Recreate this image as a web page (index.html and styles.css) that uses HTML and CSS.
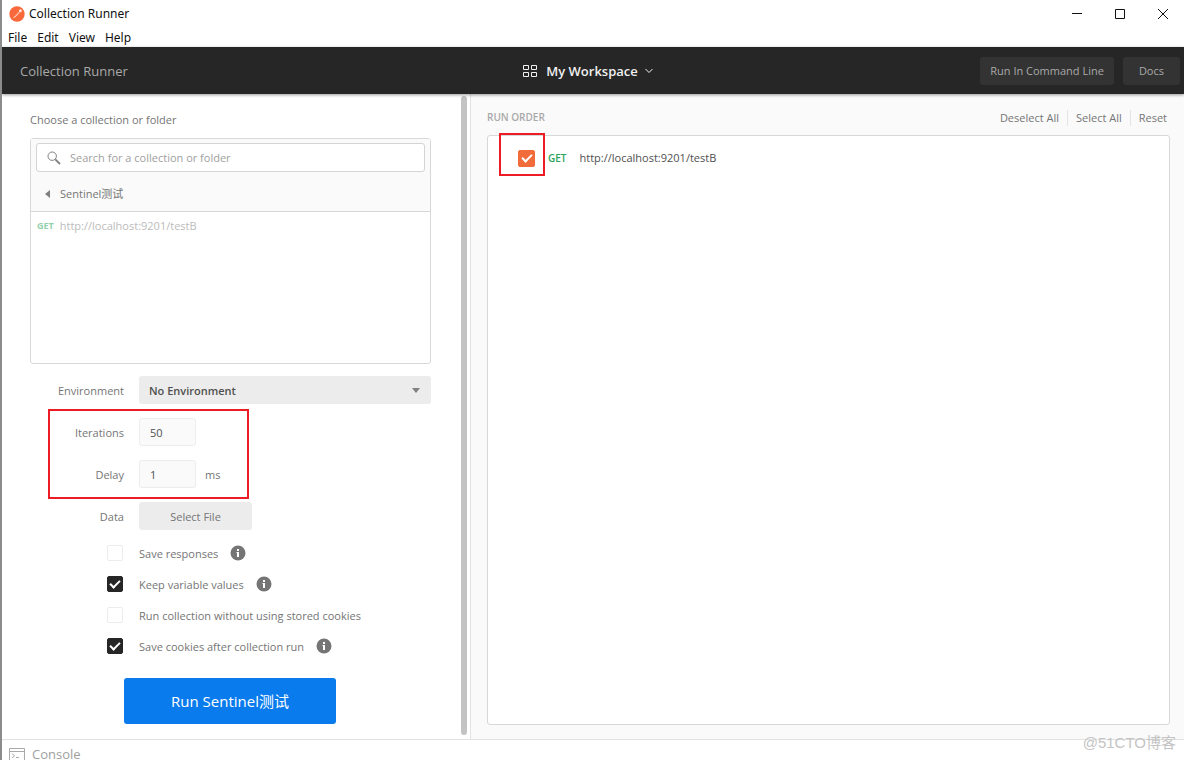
FILE: index.html
```html
<!DOCTYPE html>
<html lang="en">
<head>
<meta charset="utf-8">
<title>Collection Runner</title>
<link rel="stylesheet" href="styles.css">
</head>
<body>
<div class="window">
  <div class="titlebar">
    <svg class="logo" viewBox="0 0 16 16" aria-hidden="true"><circle cx="8" cy="8" r="7.7" fill="#f9683a"/><path d="M4 12.300 5 10.400 9.700 5.700 10.800 6.800 6.200 11.300Z" fill="#ffd9c9"/><circle cx="11.400" cy="4.700" r="1.500" fill="#ffe6da"/><path d="m5.300 10.700 4.800-4.600" stroke="#f9683a" stroke-width=".5"/></svg>
    <span class="title">Collection Runner</span>
    <div class="controls">
      <button type="button" aria-label="Minimize"><svg viewBox="0 0 12 12"><path d="M1 5.500h10"/></svg></button>
      <button type="button" aria-label="Maximize"><svg viewBox="0 0 12 12"><path d="M1.500 1.500h9v9h-9z"/></svg></button>
      <button type="button" aria-label="Close"><svg viewBox="0 0 12 12"><path d="m1 1 10 10M11 1 1 11"/></svg></button>
    </div>
  </div>
  <nav class="menubar">
    <button type="button">File</button><button type="button">Edit</button><button type="button">View</button><button type="button">Help</button>
  </nav>
  <header class="header">
    <h1>Collection Runner</h1>
    <button type="button" class="workspace">
      <svg class="grid-icon" viewBox="0 0 14 14"><path d="M.5 1.500h5v4h-5zM8.500 1.500h5v4h-5zM.5 8.500h5v4h-5zM8.500 8.500h5v4h-5z"/></svg>
      <span>My Workspace</span>
      <svg class="chevron" viewBox="0 0 8 8"><path d="m.5 2 3.500 3.500L7.500 2"/></svg>
    </button>
    <div class="header-actions">
      <button type="button">Run In Command Line</button>
      <button type="button" class="docs">Docs</button>
    </div>
  </header>
  <main class="main">
    <section class="sidebar">
      <h2 class="choose">Choose a collection or folder</h2>
      <div class="picker">
        <div class="picker-head">
          <label class="search">
            <svg viewBox="0 0 14 14" aria-hidden="true"><circle cx="5.200" cy="5.200" r="4.200"/><path d="m8.300 8.300 4.700 4.700" stroke-width="1.800"/></svg>
            <input type="text" placeholder="Search for a collection or folder" aria-label="Search for a collection or folder">
          </label>
          <button type="button" class="crumb"><svg viewBox="0 0 5 8" aria-hidden="true"><path d="M5 0v8L0 4z"/></svg>Sentinel测试</button>
        </div>
        <div class="picker-item"><span class="method">GET</span><span>http://localhost:9201/testB</span></div>
      </div>
      <form class="form">
        <div class="row">
          <label for="env">Environment</label>
          <div class="select"><select id="env"><option>No Environment</option></select><svg viewBox="0 0 8 5" aria-hidden="true"><path d="M0 0h8L4 5z"/></svg></div>
        </div>
        <div class="marked">
          <div class="row"><label for="iter">Iterations</label><input class="num" id="iter" type="text" value="50"></div>
          <div class="row"><label for="delay">Delay</label><input class="num" id="delay" type="text" value="1"><span class="unit">ms</span></div>
        </div>
        <div class="row"><label for="file">Data</label><button type="button" id="file" class="file">Select File</button></div>
        <div class="checks">
          <div class="check"><input type="checkbox" id="c1"><label for="c1">Save responses</label><svg class="info" viewBox="0 0 16 16"><circle cx="8" cy="8" r="7.500"/><path d="M7 4h2v2H7zM6.500 7H9v5H7V8h-.5z"/></svg></div>
          <div class="check"><input type="checkbox" id="c2" checked><label for="c2">Keep variable values</label><svg class="info" viewBox="0 0 16 16"><circle cx="8" cy="8" r="7.500"/><path d="M7 4h2v2H7zM6.500 7H9v5H7V8h-.5z"/></svg></div>
          <div class="check"><input type="checkbox" id="c3"><label for="c3">Run collection without using stored cookies</label></div>
          <div class="check"><input type="checkbox" id="c4" checked><label for="c4">Save cookies after collection run</label><svg class="info" viewBox="0 0 16 16"><circle cx="8" cy="8" r="7.500"/><path d="M7 4h2v2H7zM6.500 7H9v5H7V8h-.5z"/></svg></div>
        </div>
        <button type="button" class="run">Run Sentinel测试</button>
      </form>
      <div class="scrollbar"></div>
    </section>
    <section class="order">
      <div class="order-head">
        <h2>RUN ORDER</h2>
        <div class="links"><button type="button">Deselect All</button><button type="button">Select All</button><button type="button">Reset</button></div>
      </div>
      <div class="order-list">
        <div class="request">
          <span class="tick"><input type="checkbox" id="r1" checked></span>
          <span class="method">GET</span>
          <label for="r1">http://localhost:9201/testB</label>
        </div>
      </div>
    </section>
  </main>
  <footer class="footer">
    <button type="button"><svg viewBox="0 0 16 16" aria-hidden="true"><path d="M.5 2.500h15v12H.5zM.5 5.500h15M3 7.500 5.500 10 3 12M7 11.500h3"/></svg>Console</button>
  </footer>
  <div class="watermark">@51CTO博客</div>
</div>
</body>
</html>
```
FILE: styles.css
```css
*, *::before, *::after { box-sizing: border-box; }

body {
  margin: 0;
  font: 11px/18px "Open Sans", "Noto Sans CJK SC", sans-serif;
  color: #757575;
  background: #fff;
}

h1, h2 { margin: 0; font: inherit; }

button, input, select { font: inherit; color: inherit; }

button {
  padding: 0;
  border: 0;
  background: none;
}

svg { display: block; flex: none; }

.window {
  position: relative;
  display: flex;
  flex-direction: column;
  height: 100vh;
  min-height: 740px;
  overflow: hidden;
  border-left: 2px solid #8c8c8c;
}

.titlebar {
  display: flex;
  align-items: center;
  flex: 0 0 27px;
  padding-left: 7px;
  font: 12px/18px "Noto Sans", sans-serif;
  color: #111;
}

.logo { width: 16px; height: 16px; margin-right: 4px; }
.controls { display: flex; margin-left: auto; }

.controls button {
  display: grid;
  place-items: center;
  width: 43px;
  height: 27px;
}

.controls svg {
  width: 12px;
  height: 12px;
  fill: none;
  stroke: #111;
}

.menubar {
  display: flex;
  align-items: flex-end;
  gap: 10px;
  flex: 0 0 20px;
  padding-left: 6px;
  font: 12px/18px "Noto Sans", sans-serif;
  color: #111;
}

.header {
  display: grid;
  grid-template-columns: 1fr auto 1fr;
  align-items: center;
  flex: 0 0 47px;
  padding: 0 4px 0 18px;
  background: #262626;
  color: #a9a9a9;
  box-shadow: 0 1px 3px rgba(0, 0, 0, .4);
  z-index: 1;
}

.header h1 { font-size: 13px; }

.workspace {
  display: flex;
  align-items: center;
  margin-right: 24px;
  font-size: 13px;
  font-weight: 600;
  color: #f0f0f0;
}

.grid-icon { width: 14px; height: 14px; margin-right: 9px; }
.chevron { width: 8px; height: 8px; margin-left: 7px; }
.grid-icon, .chevron { fill: none; stroke: #f0f0f0; }

.header-actions {
  display: flex;
  justify-content: flex-end;
  gap: 9px;
}

.header-actions button {
  height: 28px;
  padding: 0 10px;
  border-radius: 3px;
  background: #333;
}

.header-actions .docs { padding: 0 16px; }

.main {
  display: grid;
  grid-template-columns: 469px 1fr;
  flex: 1;
  min-height: 0;
}

.sidebar {
  position: relative;
  padding: 17px 39px 0 28px;
  border-right: 1px solid #e2e2e2;
}

.choose { margin-bottom: 9px; }

.picker {
  height: 226px;
  border: 1px solid #d8d8d8;
  border-radius: 3px;
}

.picker-head {
  padding: 4px 5px 0;
  border-bottom: 1px solid #d8d8d8;
  background: #fafafa;
}

.search {
  display: flex;
  align-items: center;
  height: 29px;
  padding-left: 10px;
  border: 1px solid #d4d4d4;
  border-radius: 3px;
  background: #fff;
}

.search svg {
  width: 14px;
  height: 14px;
  fill: none;
  stroke: #808080;
}

.search input {
  flex: 1;
  min-width: 0;
  padding: 1px 9px 0;
  border: 0;
  outline: 0;
  background: none;
}

.search input::placeholder { color: #a0a0a0; opacity: 1; }

.crumb {
  display: flex;
  align-items: center;
  gap: 10px;
  height: 39px;
  padding: 4px 0 0 9px;
}

.crumb svg { width: 5px; height: 8px; fill: #808080; }

.picker-item {
  display: flex;
  gap: 6px;
  padding: 5px 6px;
  color: #bcbcbc;
}

.method {
  font-size: 9px;
  font-weight: 700;
  color: #2ba35a;
}

.picker-item .method { color: #93d1ac; }

.form { padding-top: 12px; }

.row {
  display: flex;
  align-items: center;
  height: 28px;
  margin-bottom: 14px;
}

.row label {
  width: 94px;
  margin-right: 15px;
  padding-top: 2px;
  text-align: right;
}

.select { position: relative; flex: 1; }

.select select {
  display: block;
  width: 100%;
  height: 28px;
  padding: 2px 10px 0;
  border: 0;
  border-radius: 3px;
  appearance: none;
  background: #ececec;
  font-weight: 600;
  color: #505050;
}

.select svg {
  position: absolute;
  right: 11px;
  top: 12px;
  width: 8px;
  height: 5px;
  fill: #808080;
}

.num {
  width: 57px;
  height: 28px;
  padding: 1px 10px 0;
  border: 1px solid #ececec;
  border-radius: 3px;
  background: #fafafa;
  color: #505050;
}

.unit { margin-left: 9px; padding-top: 2px; }

.marked { position: relative; }

.marked::after {
  content: "";
  position: absolute;
  left: 18px;
  top: -9px;
  width: 201px;
  height: 90px;
  border: 2px solid #ed1c24;
  pointer-events: none;
}

.file {
  width: 113px;
  height: 28px;
  padding-top: 2px;
  border-radius: 3px;
  background: #ececec;
}

.checks {
  display: grid;
  gap: 13px;
  padding-left: 77px;
}

.check { display: flex; align-items: center; height: 18px; }
.check label { margin-left: 16px; padding-top: 1px; }

input[type="checkbox"] {
  appearance: none;
  flex: none;
  width: 16px;
  height: 16px;
  margin: 0;
  border: 1px solid #ececec;
  border-radius: 2px;
  background: #fff;
}

input[type="checkbox"]:checked {
  display: grid;
  place-items: center;
  border-color: #262626;
  background: #262626;
}

input[type="checkbox"]:checked::before {
  content: "";
  width: 10px;
  height: 6px;
  margin-bottom: 3px;
  border: solid #fff;
  border-width: 0 0 2px 2px;
  transform: rotate(-45deg);
}

.info { width: 16px; height: 16px; margin-left: 12px; }
.info circle { fill: #757575; }
.info path { fill: #fff; }

.run {
  display: block;
  width: 212px;
  height: 46px;
  margin: 23px 0 0 94px;
  border-radius: 3px;
  background: #097bed;
  font-size: 15px;
  color: #fff;
}

.scrollbar {
  position: absolute;
  right: 3px;
  top: 2px;
  bottom: 4px;
  width: 6px;
  border-radius: 3px;
  background: #c3c3c3;
}

.order {
  display: flex;
  flex-direction: column;
  padding: 14px 14px 14px 16px;
  background: #fafafa;
}

.order-head {
  display: flex;
  justify-content: space-between;
  height: 27px;
}

.order-head h2 {
  font-size: 10px;
  font-weight: 600;
  color: #a9a9a9;
}

.links { display: flex; padding: 2px 3px 0 0; }
.links button { height: 16px; line-height: 16px; }

.links button + button {
  margin-left: 8px;
  padding-left: 8px;
  border-left: 1px solid #e4e4e4;
}

.order-list {
  flex: 1;
  border: 1px solid #d8d8d8;
  border-radius: 3px;
  background: #fff;
}

.request {
  display: flex;
  align-items: center;
  height: 44px;
  padding-left: 30px;
  color: #505050;
}

.request .method { margin: 0 13px; font-size: 10px; font-weight: 600; }

.tick { position: relative; }

.tick input[type="checkbox"] { display: grid; width: 17px; height: 17px; }

.tick input[type="checkbox"]:checked {
  border-color: #f26b3a;
  background: #f26b3a;
}

.tick::after {
  content: "";
  position: absolute;
  left: -19px;
  top: -17px;
  width: 46px;
  height: 43px;
  border: 2px solid #ed1c24;
  pointer-events: none;
}

.footer {
  flex: 0 0 21px;
  min-height: 0;
  overflow: hidden;
  border-top: 1px solid #e2e2e2;
  background: #fff;
}

.footer button {
  display: flex;
  align-items: flex-end;
  gap: 7px;
  padding: 6px 0 0 7px;
  font-size: 13px;
  line-height: 16px;
  color: #a0a0a0;
}

.footer svg { width: 16px; height: 16px; fill: none; stroke: #a9a9a9; }

.watermark {
  position: absolute;
  right: 8px;
  bottom: 7px;
  font: 15px/20px "Liberation Sans", "Noto Sans CJK SC", sans-serif;
  color: #c4c4c4;
}
```
